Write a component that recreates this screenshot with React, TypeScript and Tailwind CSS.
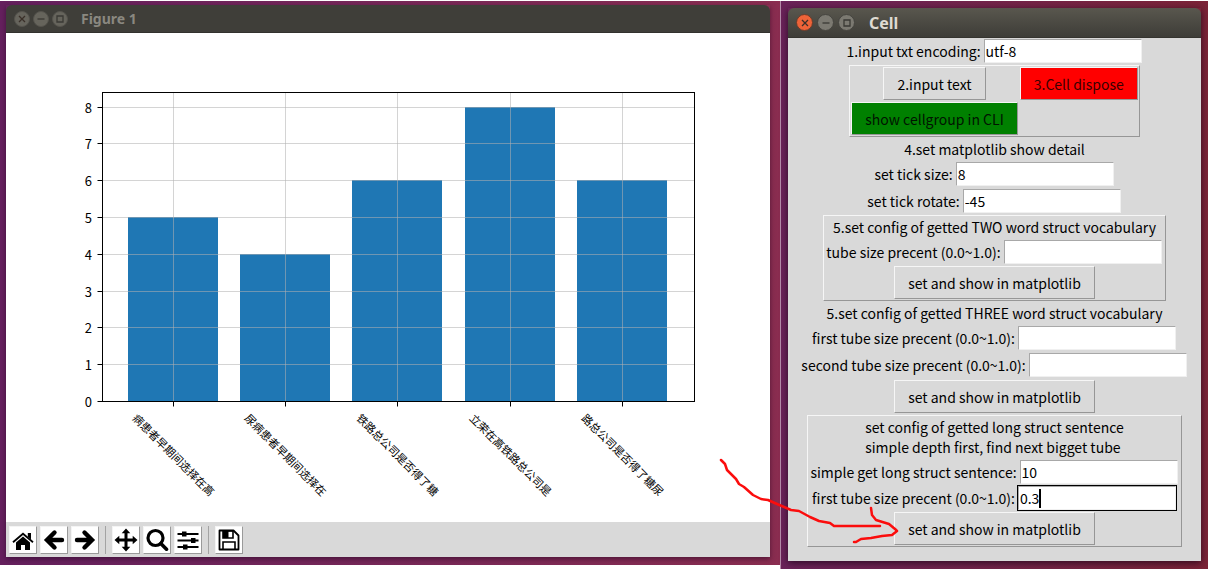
import React, { useId } from "react";

const BARS = [
  { label: "病患者早期间选择在高", value: 5 },
  { label: "尿病患者早期间选择在", value: 4 },
  { label: "铁路总公司是否得了糖", value: 6 },
  { label: "立荣在高铁路总公司是", value: 8 },
  { label: "路总公司是否得了糖尿", value: 6 },
];

const X0 = 96.5;
const X1 = 688.5;
const Y0 = 368.5;
const Y_TOP = 59.5;
const UNIT = 36.8;
const barCenter = (i: number) => Math.round(167 + i * 112.2) + 0.5;
const yOf = (v: number) => Math.round(Y0 - v * UNIT - 0.5) + 0.5;

function Chart() {
  return (
    <svg
      viewBox="0 0 764 489"
      className="block w-full bg-white font-['Noto_Sans_CJK_SC',sans-serif] font-normal"
      role="img"
      aria-label="Bar chart"
    >
      {BARS.map((b, i) => (
        <rect key={i} x={barCenter(i) - 45.5} y={yOf(b.value) - 0.5} width={90} height={Y0 - yOf(b.value)} fill="#1f77b4" />
      ))}
      <g stroke="#b0b0b0" strokeOpacity="0.55">
        {BARS.map((_, i) => (
          <line key={i} x1={barCenter(i)} x2={barCenter(i)} y1={Y_TOP} y2={Y0} />
        ))}
        {[1, 2, 3, 4, 5, 6, 7, 8].map((v) => (
          <line key={v} x1={X0} x2={X1} y1={yOf(v)} y2={yOf(v)} />
        ))}
      </g>
      <rect x={X0} y={Y_TOP} width={X1 - X0} height={Y0 - Y_TOP} fill="none" stroke="#000" />
      {[0, 1, 2, 3, 4, 5, 6, 7, 8].map((v) => (
        <g key={v}>
          <line x1={X0 - 5} x2={X0} y1={yOf(v)} y2={yOf(v)} stroke="#000" />
          <text x={86} y={yOf(v) + 5} textAnchor="end" className="text-[13px]">
            {v}
          </text>
        </g>
      ))}
      {BARS.map((b, i) => (
        <g key={i}>
          <line x1={barCenter(i)} x2={barCenter(i)} y1={Y0} y2={Y0 + 5} stroke="#000" />
          <text
            transform={`translate(${barCenter(i)} 422) rotate(45)`}
            y={4}
            textAnchor="middle"
            className="text-[11px]"
          >
            {b.label}
          </text>
        </g>
      ))}
    </svg>
  );
}

function Tool({ label, children }: { label: string; children: React.ReactNode }) {
  return (
    <button
      type="button"
      aria-label={label}
      className="flex size-7 items-center justify-center border border-t-[#f4f4f4] border-l-[#f4f4f4] border-r-[#9a9a9a] border-b-[#9a9a9a] bg-white"
    >
      <svg viewBox="0 0 24 24" className="size-6">
        {children}
      </svg>
    </button>
  );
}

function Separator() {
  return <span className="mx-[3px] h-7 w-px bg-[#a3a3a3]" />;
}

function Toolbar() {
  return (
    <div className="flex h-[35px] items-center gap-[3px] bg-[#d9d9d9] px-[3px]">
      <Tool label="Home">
        <path d="M2 14.200 12 5.800l10 8.400" fill="none" stroke="#000" strokeWidth="1.800" />
        <path d="M16.800 5h3.200v6.500l-3.200-2.700zM5 14.400l7-5.900 7 5.900V22h-5v-5h-4v5H5z" />
      </Tool>
      <Tool label="Back">
        <path d="M12.500 4.500 5 12l7.500 7.500M5.500 12H20" fill="none" stroke="#000" strokeWidth="4.400" strokeLinecap="round" />
      </Tool>
      <Tool label="Forward">
        <path d="M11.500 4.500 19 12l-7.500 7.500M18.500 12H4" fill="none" stroke="#000" strokeWidth="4.400" strokeLinecap="round" />
      </Tool>
      <Separator />
      <Tool label="Pan">
        <path d="M12 3v18M3 12h18" stroke="#000" strokeWidth="3" />
        <path d="m12 .5 4.300 4.800H7.700zM12 23.500l4.300-4.800H7.700zM.5 12l4.800-4.300v8.600zM23.500 12l-4.800-4.300v8.600z" />
      </Tool>
      <Tool label="Zoom">
        <circle cx="10.500" cy="10" r="7.500" fill="none" stroke="#000" strokeWidth="3.200" />
        <path d="m15.800 15.500 5.700 5.700" stroke="#000" strokeWidth="3.600" strokeLinecap="round" />
      </Tool>
      <Tool label="Configure subplots">
        <path d="M1.500 6h21M1.500 12.500h21M1.500 19h21" stroke="#000" strokeWidth="1.800" />
        <path d="M6 3.500h4.500v5H6zM15 10h4.500v5H15zM7 16.500h4.500v5H7z" />
      </Tool>
      <Separator />
      <Tool label="Save">
        <path d="M2.500 2.500h14L21.500 7.500v14h-19z" fill="none" stroke="#000" strokeWidth="1.800" strokeLinejoin="round" />
        <path d="M6 3h10v7H6zM6 21v-7h12v7" fill="none" stroke="#000" strokeWidth="1.600" />
        <path d="M6 3h5.500v7H6z" />
      </Tool>
    </div>
  );
}

function TitleBar({ title, active }: { title: string; active?: boolean }) {
  const dim = active ? "bg-[#7b7971] border-[#45443f]" : "bg-[#66645c] border-[#55534d]";
  const close = active ? "bg-[#ee6338] border-[#6b3c2b]" : "bg-[#66645c] border-[#55534d]";
  const dot = active
    ? "flex size-[17px] items-center justify-center rounded-full border"
    : "flex size-4 items-center justify-center rounded-full border";
  return (
    <header
      className={
        active
          ? "flex h-[30px] items-center gap-1 rounded-t-md border-b border-[#35342f] bg-linear-to-b from-[#59574e] to-[#3e3d38] px-2 text-[#dfdbd2]"
          : "flex h-[28px] items-center gap-[3px] rounded-t-md border-b border-[#33322e] bg-[#3f3e39] px-2 text-[#8a8880]"
      }
    >
      <button type="button" aria-label="Close" className={`${dot} ${close}`}>
        <svg viewBox="0 0 10 10" className="size-2.5">
          <path d="m2 2 6 6M8 2 2 8" stroke="#3a2f28" strokeWidth="1.3" />
        </svg>
      </button>
      <button type="button" aria-label="Minimize" className={`${dot} ${dim}`}>
        <svg viewBox="0 0 10 10" className="size-2.5">
          <path d="M1.500 5h7" stroke="#3a3934" strokeWidth="1.300" />
        </svg>
      </button>
      <button type="button" aria-label="Maximize" className={`${dot} ${dim}`}>
        <svg viewBox="0 0 10 10" className="size-2.5">
          <path d="M2 2h6v6H2z" fill="none" stroke="#3a3934" strokeWidth="1.300" />
        </svg>
      </button>
      <h1
        className={
          active
            ? "ml-2.5 font-['Noto_Sans',sans-serif] text-base font-bold"
            : "ml-2.5 font-['Noto_Sans',sans-serif] text-sm font-bold"
        }
      >
        {title}
      </h1>
    </header>
  );
}

function Field({ label, value, focused }: { label: string; value?: string; focused?: boolean }) {
  const id = useId();
  return (
    <div className="flex h-[26px] items-center justify-center gap-0.5">
      <label htmlFor={id} className="whitespace-nowrap">
        {label}
      </label>
      <div className={focused ? "relative border border-black" : "relative border border-transparent"}>
        <input
          id={id}
          defaultValue={value}
          className="block h-6 w-[158px] border border-t-[#a8a8a8] border-l-[#a8a8a8] border-r-[#f0f0f0] border-b-[#f0f0f0] bg-white px-px outline-none"
        />
        {focused && <span className="absolute top-[3px] left-[21px] h-[19px] w-0.5 bg-black" />}
      </div>
    </div>
  );
}

const RAISED = "border border-t-[#f6f6f6] border-l-[#f6f6f6] border-r-[#969696] border-b-[#969696]";

function Push({ children, tone }: { children: React.ReactNode; tone?: string }) {
  return (
    <button type="button" className={`m-px h-[33px] whitespace-nowrap px-[13px] ${RAISED} ${tone ?? ""}`}>
      {children}
    </button>
  );
}

function Arrow() {
  return (
    <svg viewBox="720 455 184 90" className="pointer-events-none absolute top-10 left-[-90px] h-[90px] w-[184px]">
      <path
        d="M723 459l4 4 2 6 9 9 3 5 5 3 9 8 8 4 7 1 9 4 14 6 8 1 11 6 9 4 11 2 4 3h46M873 507l1 7 4 5 13 4 6 5 2 2-5 4-10 1-11 2-10 1-5 3-2 0"
        fill="none"
        stroke="#fb0d0d"
        strokeWidth="2.500"
        strokeLinecap="round"
        strokeLinejoin="round"
      />
    </svg>
  );
}

export default function App() {
  return (
    <main className="flex min-h-screen items-start bg-white font-['Noto_Sans_CJK_SC',sans-serif] text-sm font-normal text-black">
      <section className="mt-px min-w-0 flex-1 bg-linear-to-r from-[#65205e] to-[#8a2d50] px-1.5 pt-1 pr-2.5 pb-2">
        <div className="shadow-[0_2px_5px_rgba(30,0,30,0.5)]">
          <TitleBar title="Figure 1" />
          <Chart />
          <Toolbar />
        </div>
      </section>

      <section className="mt-px min-h-[568px] w-[428px] shrink-0 border-l border-[#b58aa8] bg-linear-to-r from-[#6a2259] to-[#7b2337] px-[7px] pt-[7px] pb-2">
        <div className="shadow-[0_2px_7px_rgba(20,0,20,0.7)]">
          <TitleBar title="Cell" active />
          <form className="flex flex-col items-center gap-px bg-[#d9d9d9] pb-3.5 leading-5">
            <Field label="1.input txt encoding:" value="utf-8" />
            <div className={`grid grid-cols-[auto_auto] justify-items-center ${RAISED}`}>
              <Push>2.input text</Push>
              <Push tone="bg-[#ff0000] text-[#3a0000]">3.Cell dispose</Push>
              <Push tone="bg-[#008000] text-[#001400]">show cellgroup in CLI</Push>
            </div>
            <p className="py-px">4.set matplotlib show detail</p>
            <Field label="set tick size:" value="8" />
            <Field label="set tick rotate:" value="-45" />
            <div className={`flex flex-col items-center px-0.5 ${RAISED}`}>
              <p className="pt-px pb-0.5">5.set config of getted TWO word struct vocabulary</p>
              <Field label="tube size precent (0.0~1.0):" />
              <Push>set and show in matplotlib</Push>
            </div>
            <p className="py-px">5.set config of getted THREE word struct vocabulary</p>
            <Field label="first tube size precent (0.0~1.0):" />
            <Field label="second tube size precent (0.0~1.0):" />
            <Push>set and show in matplotlib</Push>
            <div className={`relative flex flex-col items-center px-0.5 ${RAISED}`}>
              <p className="pt-px pb-0.5">
                set config of getted long struct sentence
                <br />
                simple depth first, find next bigget tube
              </p>
              <Field label="simple get long struct sentence:" value="10" />
              <Field label="first tube size precent (0.0~1.0):" value="0.3" focused />
              <Push>set and show in matplotlib</Push>
              <Arrow />
            </div>
          </form>
        </div>
      </section>
    </main>
  );
}
